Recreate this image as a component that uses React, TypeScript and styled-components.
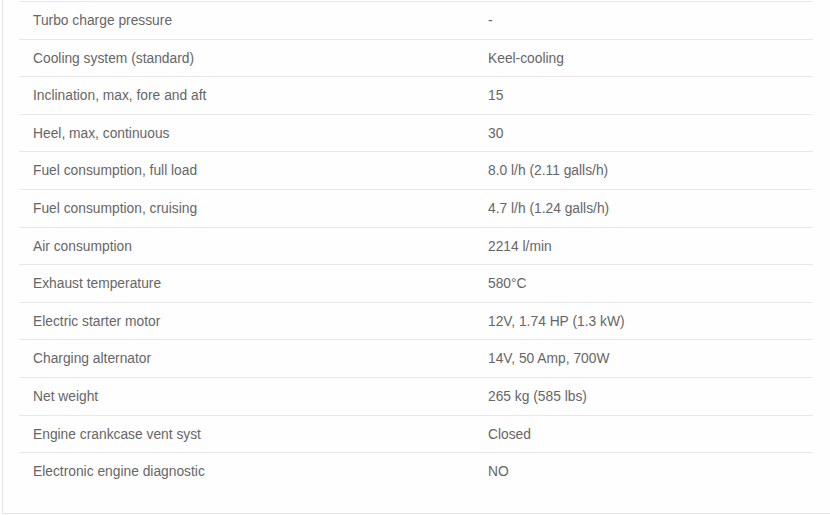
import styled, { createGlobalStyle } from 'styled-components'

const GlobalStyle = createGlobalStyle`
  html, body {
    margin: 0;
    padding: 0;
    background: #fff;
  }
  body {
    font-family: 'Liberation Sans', Arial, sans-serif;
  }
`

const Page = styled.div`
  padding-left: 2px;
  width: 860px;
`

const Panel = styled.div`
  border-left: 1px solid #e6e6e6;
  border-bottom: 1px solid #e6e6e6;
  padding: 1px 0 23px 16px;
  background: #fefefe;
`

const SpecTable = styled.table`
  width: 794px;
  border-collapse: collapse;
  table-layout: fixed;
  font-size: 13.8px;
  color: #666;
`

const LabelCol = styled.col`
  width: 455px;
`

const Row = styled.tr`
  border-top: 1px solid #e8e8e8;
`

const Cell = styled.td`
  padding: 12px 14px 10px;
  line-height: 14.6px;
  vertical-align: middle;
  white-space: nowrap;
`

const specs: [string, string][] = [
  ['Turbo charge pressure', '-'],
  ['Cooling system (standard)', 'Keel-cooling'],
  ['Inclination, max, fore and aft', '15'],
  ['Heel, max, continuous', '30'],
  ['Fuel consumption, full load', '8.0 l/h (2.11 galls/h)'],
  ['Fuel consumption, cruising', '4.7 l/h (1.24 galls/h)'],
  ['Air consumption', '2214 l/min'],
  ['Exhaust temperature', '580°C'],
  ['Electric starter motor', '12V, 1.74 HP (1.3 kW)'],
  ['Charging alternator', '14V, 50 Amp, 700W'],
  ['Net weight', '265 kg (585 lbs)'],
  ['Engine crankcase vent syst', 'Closed'],
  ['Electronic engine diagnostic', 'NO'],
]

const App = () => {
  return (
    <Page>
      <GlobalStyle />
      <Panel>
        <SpecTable>
          <colgroup>
            <LabelCol />
            <col />
          </colgroup>
          <tbody>
            {specs.map(([label, value]) => (
              <Row key={label}>
                <Cell>{label}</Cell>
                <Cell>{value}</Cell>
              </Row>
            ))}
          </tbody>
        </SpecTable>
      </Panel>
    </Page>
  )
}

export default App
